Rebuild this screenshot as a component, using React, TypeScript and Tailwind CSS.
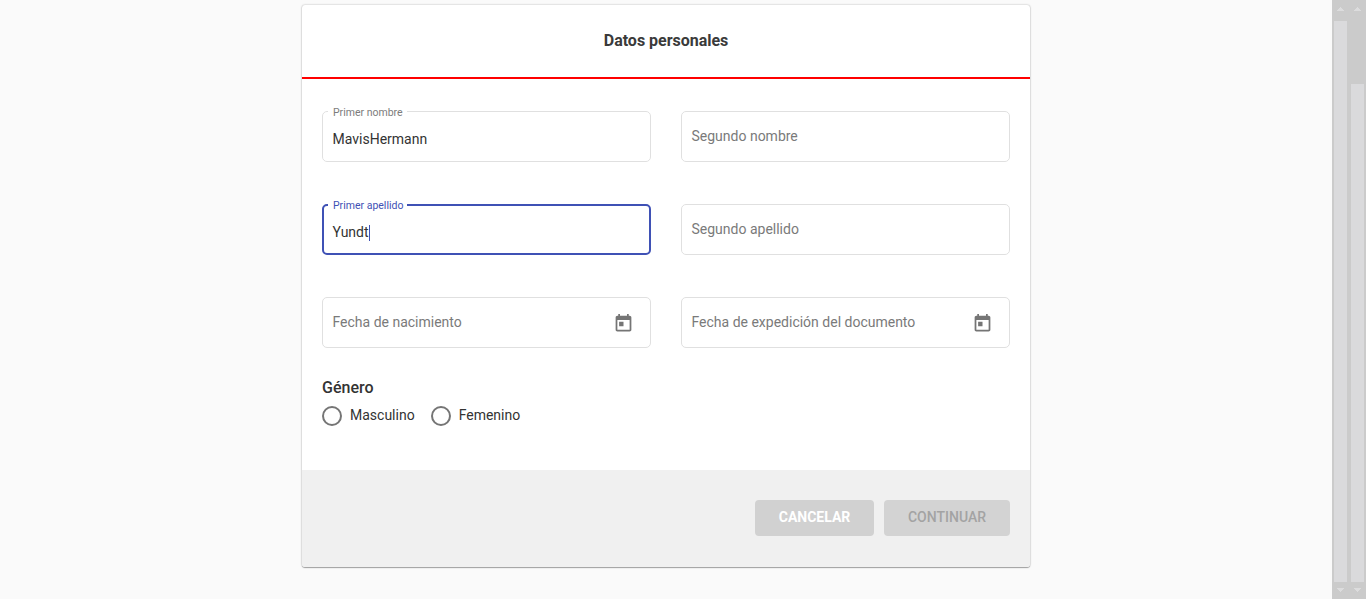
import React, { useState } from 'react';

function CalendarIcon() {
  return (
    <svg viewBox="0 0 24 24" className="mt-0.5 size-[21px] shrink-0 fill-[#757575]">
      <path d="M19 3h-1V1h-2v2H8V1H6v2H5c-1.11 0-1.99.9-1.99 2L3 19c0 1.1.89 2 2 2h14c1.1 0 2-.9 2-2V5c0-1.1-.9-2-2-2zm0 16H5V8h14v11zM7 10h5v5H7z" />
    </svg>
  );
}

type FieldProps = {
  label: string;
  value?: string;
  focused?: boolean;
  date?: boolean;
};

function Field({ label, value, focused = false, date = false }: FieldProps) {
  return (
    <div
      className={
        focused
          ? 'relative flex h-[51px] items-center rounded-[5px] border-2 border-[#3f51b5] pl-[8.5px] pr-[15px]'
          : 'relative flex h-[51px] items-center rounded-[5px] border border-[#e0e0e0] pl-[9.5px] pr-4'
      }
    >
      {value ? (
        <>
          <span
            className={
              focused
                ? 'absolute -top-[7px] left-[4px] h-[14px] bg-white pl-[5px] pr-1 text-[10.5px] leading-[14px] whitespace-nowrap text-[#3f51b5]'
                : 'absolute -top-[6px] left-[5px] h-[14px] bg-white pl-[5px] pr-1 text-[10.5px] leading-[14px] whitespace-nowrap text-[#7c7c7c]'
            }
          >
            {label}
          </span>
          <span className="mt-[5px] text-sm leading-4 text-[#333333]">{value}</span>
          {focused && <span className="mt-[6px] h-4 w-px bg-[#3f51b5]" />}
        </>
      ) : (
        <span className="-mt-px grow text-sm leading-4 whitespace-nowrap text-[#7a7a7a]">{label}</span>
      )}
      {date && <CalendarIcon />}
    </div>
  );
}

function Radio({ label, checked, onSelect }: { label: string; checked: boolean; onSelect: () => void }) {
  return (
    <button type="button" role="radio" aria-checked={checked} onClick={onSelect} className="flex items-center gap-2">
      <span className="flex size-5 items-center justify-center rounded-full border-2 border-[#757575]">
        {checked && <span className="size-2.5 rounded-full bg-[#3f51b5]" />}
      </span>
      <span className="-mt-0.5 text-sm leading-5 text-[#333333]">{label}</span>
    </button>
  );
}

function Arrow({ down = false }: { down?: boolean }) {
  return (
    <svg viewBox="0 0 7 4" className="h-1 w-[7px] shrink-0 fill-[#dcdcdd]" shapeRendering="crispEdges">
      {down ? <path d="M0 0h7v1H6v1H5v1H4v1H3V3H2V2H1V1H0z" /> : <path d="M0 4h7V3H6V2H5V1H4V0H3v1H2v1H1v1H0z" />}
    </svg>
  );
}

function Scrollbar({ offset = false }: { offset?: boolean }) {
  return (
    <div className="flex h-full w-[17px] flex-col items-center bg-[#cbcbcb]">
      <div className="flex h-[21px] w-full shrink-0 justify-center pt-[7px]">
        <Arrow />
      </div>
      <div className={offset ? 'mt-[63px] w-[13px] grow bg-[#dadadc]' : 'w-[13px] grow bg-[#dadadc]'} />
      <div className="flex h-[17px] w-full shrink-0 justify-center pt-[6px]">
        <Arrow down />
      </div>
    </div>
  );
}

export default function App() {
  const [gender, setGender] = useState('');
  return (
    <div className="flex h-[599px] w-[1366px] overflow-hidden bg-[#fafafa] font-['Roboto',sans-serif] text-[#333333]">
      <main className="flex grow justify-center pt-[5px]">
        <section className="flex h-[562px] w-[728px] flex-col overflow-hidden rounded-[3px] bg-white shadow-[0_1px_1px_0_rgba(0,0,0,0.3),0_0_2px_0_rgba(0,0,0,0.32)]">
          <header className="flex h-[74px] shrink-0 items-center justify-center border-b-2 border-[#ff0000]">
            <h1 className="text-base leading-6 font-bold tracking-[-0.02px] text-[#3a3a3a]">Datos personales</h1>
          </header>
          <form className="grow px-5 pt-8" onSubmit={(e) => e.preventDefault()}>
            <div className="grid grid-cols-2 gap-x-[30px] gap-y-[42px]">
              <Field label="Primer nombre" value="MavisHermann" />
              <Field label="Segundo nombre" />
              <Field label="Primer apellido" value="Yundt" focused />
              <Field label="Segundo apellido" />
              <Field label="Fecha de nacimiento" date />
              <Field label="Fecha de expedición del documento" date />
            </div>
            <h2 className="mt-[28px] text-base leading-6 font-medium">Género</h2>
            <div role="radiogroup" className="mt-[6px] flex gap-4">
              <Radio label="Masculino" checked={gender === 'M'} onSelect={() => setGender('M')} />
              <Radio label="Femenino" checked={gender === 'F'} onSelect={() => setGender('F')} />
            </div>
          </form>
          <footer className="flex h-[97px] shrink-0 items-start justify-end gap-2.5 bg-[#f0f0f0] px-5 pt-[30px]">
            <button type="button" className="h-9 w-[119px] rounded bg-[#d1d1d1] pb-0.5 text-sm font-bold text-white">
              CANCELAR
            </button>
            <button type="button" className="h-9 w-[126px] rounded bg-[#d3d3d3] pb-0.5 text-sm font-medium text-[#a3a3a3]">
              CONTINUAR
            </button>
          </footer>
        </section>
      </main>
      <aside className="flex h-full w-[34px] shrink-0">
        <Scrollbar />
        <Scrollbar offset />
      </aside>
    </div>
  );
}
